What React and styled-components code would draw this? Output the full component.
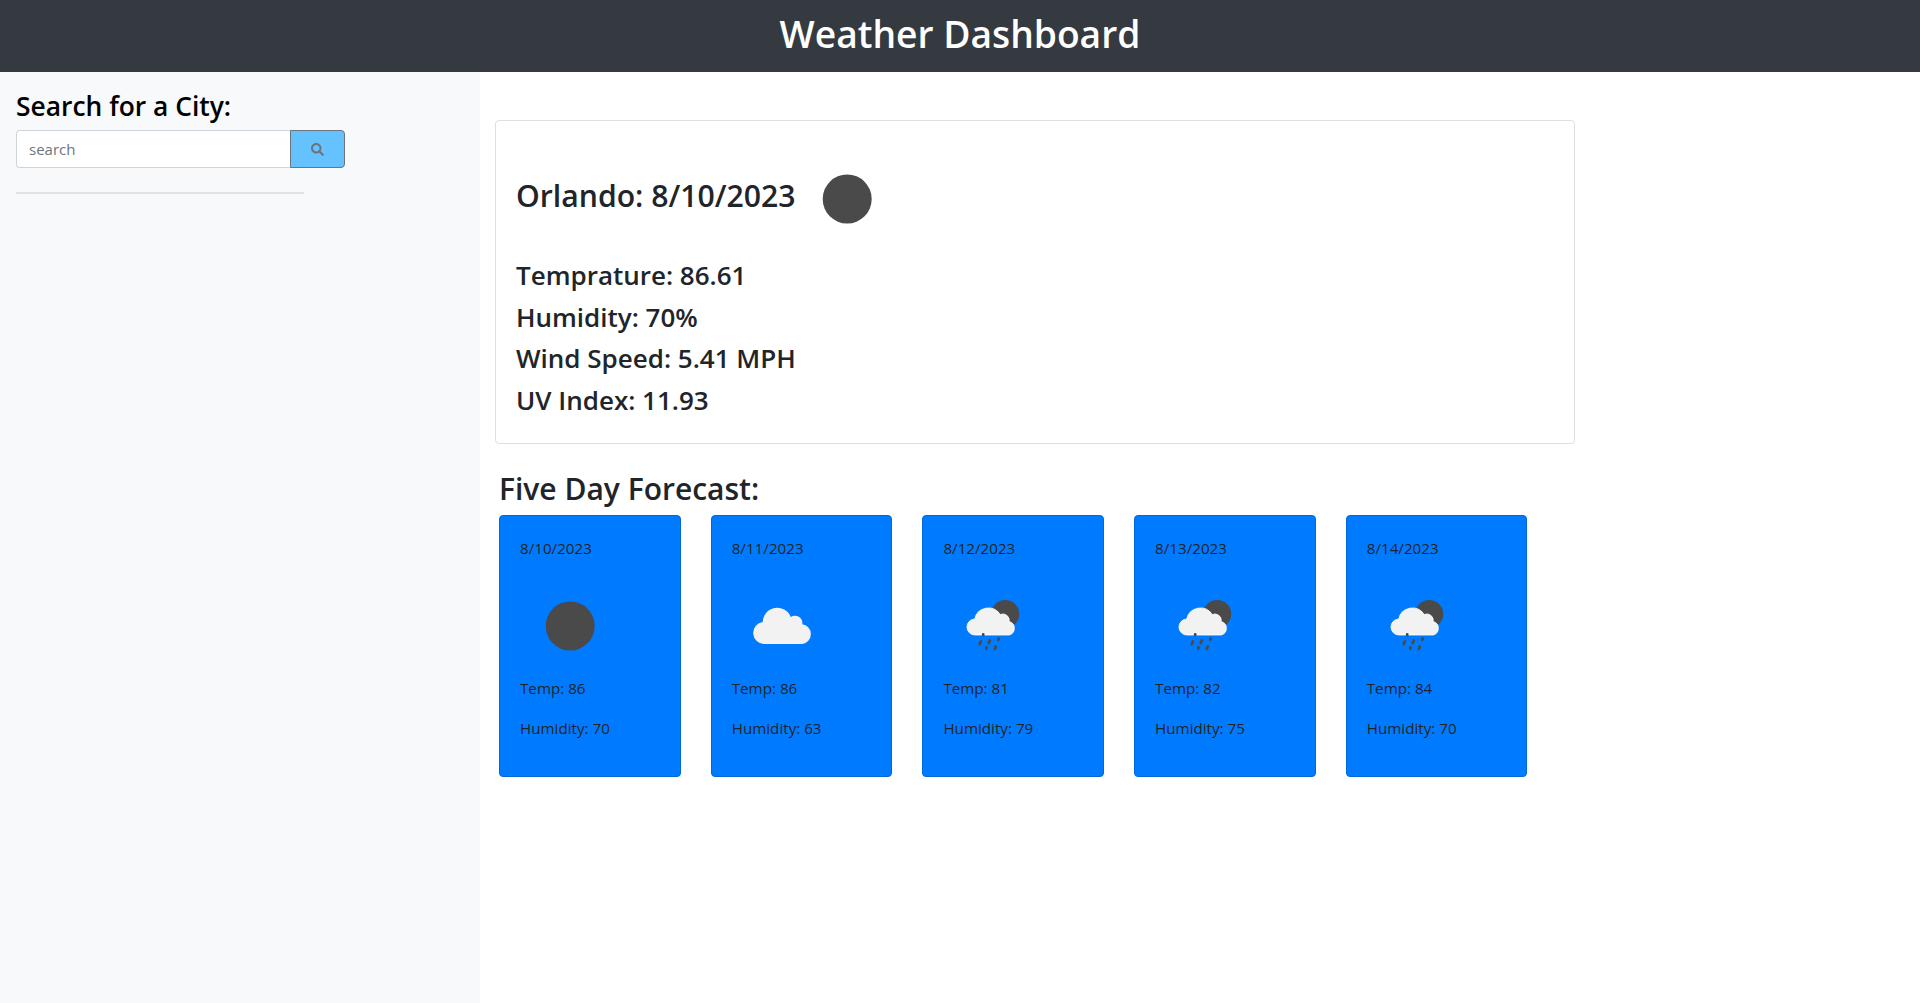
import React from "react";
import styled, { createGlobalStyle } from "styled-components";
import { FaSearch } from "react-icons/fa";

const GlobalStyle = createGlobalStyle`
  * { box-sizing: border-box; }
  body {
    margin: 0;
    background: #fff;
    color: #212529;
    font-family: "Open Sans", "Noto Sans", sans-serif;
  }
`;

const Page = styled.div`
  display: flex;
  flex-direction: column;
  height: 1003px;
  overflow: hidden;
`;

const Header = styled.header`
  height: 72px;
  background: #343a40;
  display: flex;
  align-items: center;
  justify-content: center;
  padding-bottom: 3px;
`;

const Title = styled.h1`
  margin: 0;
  color: #fff;
  font-size: 37.2px;
  font-weight: 600;
  line-height: 1.2;
`;

const Body = styled.div`
  flex: 1;
  display: flex;
`;

const Sidebar = styled.aside`
  width: 480px;
  background: #f8f9fa;
  padding: 16px;
`;

const SearchTitle = styled.h3`
  margin: 0 0 6px;
  color: #000;
  font-size: 26.4px;
  font-weight: 600;
  line-height: 36px;
`;

const SearchRow = styled.form`
  display: flex;
  width: 329px;
  height: 38px;
`;

const SearchInput = styled.input`
  flex: 1;
  min-width: 0;
  border: 1px solid #ced4da;
  border-right: 0;
  border-radius: 4px 0 0 4px;
  padding: 0 12px;
  font: 400 15px "Open Sans", sans-serif;
  color: #495057;
  background: #fff;
  &::placeholder { color: #6c757d; opacity: 1; }
`;

const SearchButton = styled.button`
  width: 55px;
  border: 1px solid #6c757d;
  border-radius: 0 4px 4px 0;
  background: #66c2ff;
  color: #6c757d;
  display: flex;
  align-items: center;
  justify-content: center;
  padding: 0;
  font-size: 13px;
`;

const Divider = styled.hr`
  width: 288px;
  margin: 24px 0 0;
  border: 0;
  border-top: 2px solid #e0e1e3;
`;

const Main = styled.main`
  flex: 1;
  padding: 48px 0 0 15px;
`;

const CurrentCard = styled.section`
  width: 1080px;
  height: 324px;
  border: 1px solid #dfdfdf;
  border-radius: 4px;
  padding: 28px 20px 0;
`;

const CityRow = styled.div`
  display: flex;
  align-items: center;
  height: 100px;
  margin-bottom: 6px;
`;

const CityName = styled.h2`
  margin: 0 0 6px;
  width: 280.5px;
  font-size: 30.2px;
  font-weight: 600;
  line-height: 1.2;
  white-space: nowrap;
`;

const Stat = styled.p`
  margin: 0;
  font-size: 26px;
  font-weight: 600;
  line-height: 41.6px;
  white-space: nowrap;
`;

const Forecast = styled.section`
  padding: 26px 0 0 4px;
`;

const ForecastTitle = styled.h2`
  margin: 0 0 8px;
  font-size: 30px;
  font-weight: 600;
  line-height: 37px;
`;

const DayRow = styled.div`
  display: flex;
  gap: 30px;
`;

const DayCard = styled.article`
  width: 181.7px;
  height: 262px;
  background: #007bff;
  border: 1px solid #0069d9;
  border-radius: 4px;
  padding: 20px;
`;

const DayText = styled.p`
  margin: 0 0 16px;
  font-size: 15.2px;
  line-height: 24px;
  white-space: nowrap;
  color: #212529;
`;

const IconBox = styled.svg`
  display: block;
  width: 100px;
  height: 100px;
  flex: none;
`;

const CLOUD =
  "M32 68a11 11 0 0 1-1.5-21.9A14.5 14.5 0 0 1 58.5 41a7.5 7.5 0 0 1 11.6 7.2A10 10 0 0 1 70 68Z";
const SMALL_CLOUD =
  "M32 59a8 8 0 0 1-.5-16A14 14 0 0 1 57 38.5a6.5 6.5 0 0 1 9 7A7 7 0 0 1 66 59Z";

function WeatherIcon({ kind }) {
  if (kind === "clear") {
    return (
      <IconBox viewBox="-0.2 0 100 100">
        <circle cx="50" cy="50" r="24.5" fill="#4a4a4a" />
      </IconBox>
    );
  }
  if (kind === "cloud") {
    return (
      <IconBox viewBox="-0.2 0 100 100">
        <path d={CLOUD} fill="#f2f2f2" />
      </IconBox>
    );
  }
  return (
    <IconBox viewBox="-0.2 0 100 100">
      <circle cx="62" cy="38" r="14" fill="#4a4a4a" />
      <path d={SMALL_CLOUD} fill="#f2f2f2" stroke="#fff" strokeWidth="0.8" />
      <g stroke="#4a4a4a" strokeWidth="2.8" strokeLinecap="round">
        <path d="M40 58.5v.5" />
        <path d="M37.6 65.5l-1 2.6" />
        <path d="M46.6 64.5l-1 2.6" />
        <path d="M55.6 62.5l-.6 1.4" />
        <path d="M43.4 71.5l-.4 1" />
        <path d="M52.6 70.5l-1 2.4" />
      </g>
    </IconBox>
  );
}

const days = [
  { date: "8/10/2023", kind: "clear", temp: 86, humidity: 70 },
  { date: "8/11/2023", kind: "cloud", temp: 86, humidity: 63 },
  { date: "8/12/2023", kind: "rain", temp: 81, humidity: 79 },
  { date: "8/13/2023", kind: "rain", temp: 82, humidity: 75 },
  { date: "8/14/2023", kind: "rain", temp: 84, humidity: 70 },
];

export default function App() {
  return (
    <Page>
      <GlobalStyle />
      <Header>
        <Title>Weather Dashboard</Title>
      </Header>
      <Body>
        <Sidebar>
          <SearchTitle>Search for a City:</SearchTitle>
          <SearchRow onSubmit={(e) => e.preventDefault()}>
            <SearchInput placeholder="search" />
            <SearchButton aria-label="search">
              <FaSearch />
            </SearchButton>
          </SearchRow>
          <Divider />
        </Sidebar>
        <Main>
          <CurrentCard>
            <CityRow>
              <CityName>Orlando: 8/10/2023</CityName>
              <WeatherIcon kind="clear" />
            </CityRow>
            <Stat>Temprature: 86.61</Stat>
            <Stat>Humidity: 70%</Stat>
            <Stat>Wind Speed: 5.41 MPH</Stat>
            <Stat>UV Index: 11.93</Stat>
          </CurrentCard>
          <Forecast>
            <ForecastTitle>Five Day Forecast:</ForecastTitle>
            <DayRow>
              {days.map((day) => (
                <DayCard key={day.date}>
                  <DayText>{day.date}</DayText>
                  <WeatherIcon kind={day.kind} />
                  <DayText>Temp: {day.temp}</DayText>
                  <DayText>Humidity: {day.humidity}</DayText>
                </DayCard>
              ))}
            </DayRow>
          </Forecast>
        </Main>
      </Body>
    </Page>
  );
}
